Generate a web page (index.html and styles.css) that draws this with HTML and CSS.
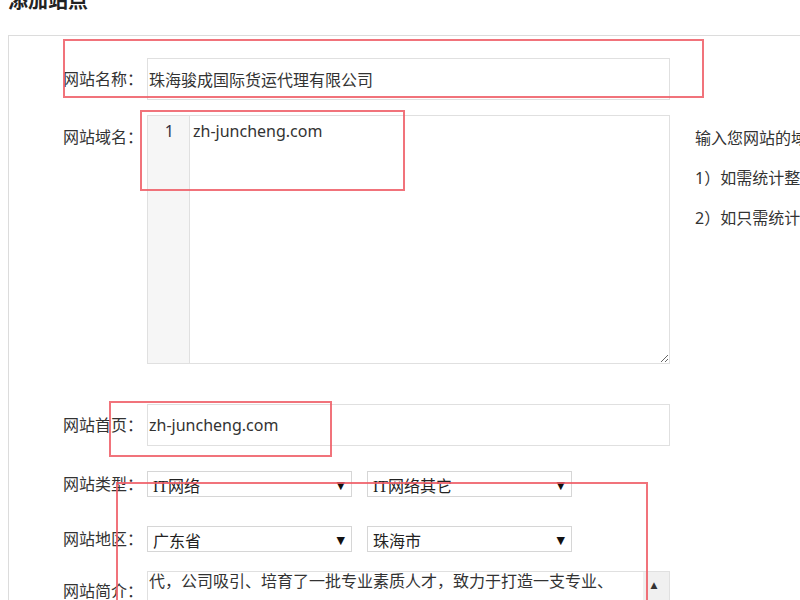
FILE: index.html
```html
<!DOCTYPE html>
<html lang="zh-CN">

<head>
  <meta charset="UTF-8">
  <meta name="viewport" content="width=device-width, initial-scale=1.0">
  <title>添加站点</title>
  <link rel="stylesheet" href="styles.css">
</head>

<body>
  <h2 class="page-title">添加站点</h2>

  <div class="panel">
    <div class="form-row">
      <label class="form-label">网站名称：</label>
      <input type="text" class="text-input" value="珠海骏成国际货运代理有限公司">
    </div>

    <div class="form-row row-domain">
      <label class="form-label">网站域名：</label>
      <div class="code-box">
        <div class="gutter">1</div>
        <textarea class="code-area">zh-juncheng.com</textarea>
      </div>
      <div class="help">
        <p>输入您网站的域名，多个域名请换行输入</p>
        <p>1）如需统计整个网站，请填写主域名</p>
        <p>2）如只需统计某个子域名，请填写子域名</p>
      </div>
    </div>

    <div class="form-row row-home">
      <label class="form-label">网站首页：</label>
      <input type="text" class="text-input" value="zh-juncheng.com">
    </div>

    <div class="form-row row-select">
      <label class="form-label">网站类型：</label>
      <div class="select-box">
        <span>IT网络</span>
        <span class="arrow">▼</span>
      </div>
      <div class="select-box">
        <span>IT网络其它</span>
        <span class="arrow">▼</span>
      </div>
    </div>

    <div class="form-row row-select row-region">
      <label class="form-label">网站地区：</label>
      <div class="select-box">
        <span>广东省</span>
        <span class="arrow">▼</span>
      </div>
      <div class="select-box">
        <span>珠海市</span>
        <span class="arrow">▼</span>
      </div>
    </div>

    <div class="form-row row-intro">
      <label class="form-label">网站简介：</label>
      <div class="intro-box">
        <div class="intro-text">代，公司吸引、培育了一批专业素质人才，致力于打造一支专业、</div>
        <div class="scroll-bar"><span class="scroll-up">▲</span></div>
      </div>
    </div>

    <!-- annotation boxes drawn over the form -->
    <div class="mark mark-name"></div>
    <div class="mark mark-domain"></div>
    <div class="mark mark-home"></div>
    <div class="mark mark-type"></div>
  </div>
</body>

</html>
```

FILE: styles.css
```css
html,
body {
  overflow: hidden;
}

body {
  margin: 0;
  padding: 0 0 0 8px;
  font-family: "Noto Sans", "Noto Sans CJK SC", sans-serif;
  font-size: 16px;
  color: #333;
  background-color: #fff;
}

.page-title {
  margin: -10px 0 0 0;
  height: 23px;
  line-height: 22px;
  font-size: 20px;
  font-weight: bold;
  color: #222;
}

.panel {
  position: relative;
  margin-top: 22px;
  width: 1000px;
  height: 700px;
  border: 1px solid #dcdcdc;
  padding: 22px 0 0 54px;
  box-sizing: border-box;
}

.form-row {
  display: flex;
  align-items: flex-start;
}

.form-label {
  width: 84px;
  flex-shrink: 0;
  line-height: 42px;
  white-space: nowrap;
}

.text-input {
  width: 523px;
  height: 42px;
  box-sizing: border-box;
  border: 1px solid #e0e0e0;
  padding: 0 1px;
  margin: 0;
  font: inherit;
  color: #333;
  outline: none;
}

/* domain field with line numbers */
.row-domain {
  margin-top: 15px;
}

.row-domain .form-label {
  line-height: 44px;
}

.code-box {
  display: flex;
  width: 523px;
  height: 249px;
  box-sizing: border-box;
  border: 1px solid #e0e0e0;
  flex-shrink: 0;
}

.gutter {
  width: 42px;
  box-sizing: border-box;
  padding: 5px 15px 0 0;
  text-align: right;
  line-height: 20px;
  color: #334;
  background-color: #f6f6f6;
  border-right: 1px solid #e0e0e0;
}

.code-area {
  flex: 1;
  border: none;
  margin: 0;
  padding: 5px 3px;
  font: inherit;
  line-height: 20px;
  color: #333;
  outline: none;
}

.help {
  margin-left: 25px;
  white-space: nowrap;
}

.help p {
  margin: 0;
  line-height: 40px;
  height: 40px;
}

.help p:first-child {
  margin-top: 3px;
}

.row-home {
  margin-top: 40px;
}

/* dropdowns */
.row-select {
  margin-top: 25px;
}

.row-region {
  margin-top: 29px;
}

.row-select .form-label {
  line-height: 26px;
}

.select-box {
  display: flex;
  justify-content: space-between;
  align-items: center;
  width: 205px;
  height: 26px;
  box-sizing: border-box;
  border: 1px solid #d6d6d6;
  padding: 2px 6px 0 5px;
  margin-right: 15px;
  font-family: "Liberation Serif", "Noto Sans CJK SC", serif;
  color: #222;
}

.arrow {
  font-size: 11px;
  font-family: "DejaVu Sans", sans-serif;
  color: #111;
}

/* intro textarea, scrolled */
.row-intro {
  margin-top: 19px;
}

.row-intro .form-label {
  line-height: 40px;
}

.intro-box {
  display: flex;
  width: 523px;
  height: 80px;
  box-sizing: border-box;
  border: 1px solid #e0e0e0;
  overflow: hidden;
}

.intro-text {
  flex: 1;
  padding-left: 1px;
  margin-top: -1px;
  line-height: 20px;
  white-space: nowrap;
  overflow: hidden;
}

.scroll-bar {
  width: 26px;
  background-color: #f0f0f0;
  text-align: center;
}

.scroll-up {
  display: block;
  margin-top: 8px;
  margin-right: 4px;
  font-size: 9px;
  font-family: "DejaVu Sans", sans-serif;
  color: #333;
}

/* red annotation boxes */
.mark {
  position: absolute;
  box-sizing: border-box;
  border: 2px solid rgba(238, 90, 100, 0.85);
  pointer-events: none;
}

.mark-name {
  left: 54px;
  top: 3px;
  width: 641px;
  height: 59px;
}

.mark-domain {
  left: 131px;
  top: 74px;
  width: 265px;
  height: 81px;
}

.mark-home {
  left: 100px;
  top: 365px;
  width: 223px;
  height: 56px;
}

.mark-type {
  left: 107px;
  top: 446px;
  width: 532px;
  height: 200px;
}
```
